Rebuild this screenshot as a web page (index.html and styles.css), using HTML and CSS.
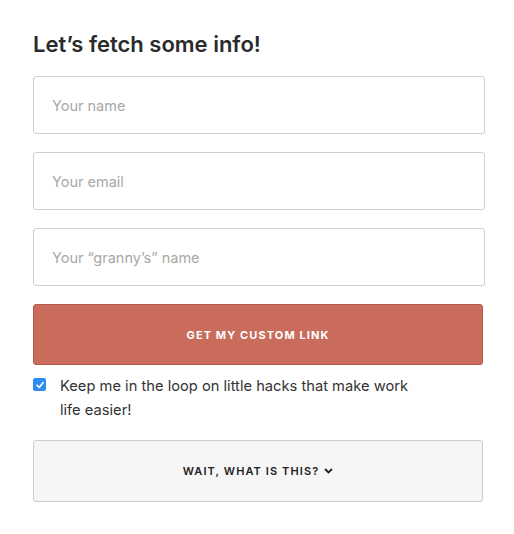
FILE: index.html
```html
<!DOCTYPE html>
<html>
<head>
<meta charset="utf-8">
<link rel="stylesheet" href="styles.css">
</head>
<body>
<div class="card">
  <h1 class="title">Let’s fetch some info!</h1>
  <div class="field">Your name</div>
  <div class="field">Your email</div>
  <div class="field">Your “granny’s” name</div>
  <div class="btn">GET MY CUSTOM LINK</div>
  <div class="check">
    <span class="box"><svg width="10" height="10" viewBox="0 0 10 10"><path d="M2 5.2 L4.2 7.4 L8.2 2.6" fill="none" stroke="#fff" stroke-width="1.6" stroke-linecap="round" stroke-linejoin="round"/></svg></span>
    <span class="check-text">Keep me in the loop on little hacks that make work life easier!</span>
  </div>
  <div class="more">WAIT, WHAT IS THIS? <svg class="chev" width="9" height="6" viewBox="0 0 9 6"><path d="M1 1 L4.5 4.5 L8 1" fill="none" stroke="#222" stroke-width="1.8"/></svg></div>
</div>
</body>
</html>
```
FILE: styles.css
```css
body {
  margin: 0;
  background: #fff;
  font-family: "Inter", "Open Sans", sans-serif;
  color: #333;
}
.card {
  width: 452px;
  padding: 30px 0 0 33px;
  display: flex;
  flex-direction: column;
}
.title {
  margin: 0 0 17px 0;
  font-family: "Inter", sans-serif;
  font-size: 22px;
  font-weight: 600;
  color: #2b2b2b;
  line-height: 29px;
  letter-spacing: 0;
}
.field {
  height: 56px;
  border: 1px solid #cfcfcf;
  border-radius: 3px;
  margin-bottom: 18px;
  padding-left: 18px;
  display: flex;
  align-items: center;
  font-size: 14.5px;
  color: #a8a8a8;
}
.btn {
  width: 448px;
  height: 59px;
  background: #c96c5c;
  border: 1px solid #b45a4b;
  border-radius: 3px;
  display: flex;
  align-items: center;
  justify-content: center;
  color: #fff;
  font-size: 11px;
  font-weight: 700;
  letter-spacing: 1.1px;
  margin-bottom: 9px;
}
.check {
  display: flex;
  align-items: flex-start;
  margin-bottom: 18px;
}
.box {
  width: 13px;
  height: 13px;
  background: #2f8cf0;
  border-radius: 2px;
  display: flex;
  align-items: center;
  justify-content: center;
  margin-top: 4px;
  margin-right: 14px;
  flex: none;
}
.check-text {
  width: 360px;
  font-size: 14.7px;
  line-height: 24px;
  color: #333;
}
.more {
  width: 448px;
  height: 60px;
  background: #f6f6f6;
  border: 1px solid #cdcdcd;
  border-radius: 3px;
  display: flex;
  align-items: center;
  justify-content: center;
  color: #222;
  font-size: 11px;
  font-weight: 600;
  letter-spacing: 1.1px;
}
.chev {
  margin-left: 5px;
}
```
